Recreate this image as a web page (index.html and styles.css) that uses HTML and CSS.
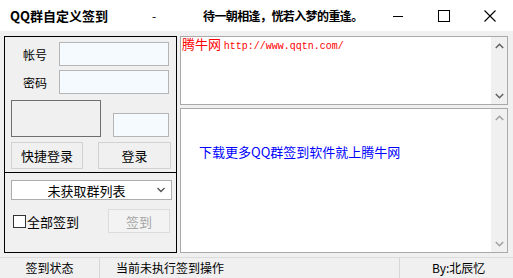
FILE: index.html
```html
<!DOCTYPE html>
<html lang="zh-CN">
<head>
    <meta charset="UTF-8">
    <title>QQ群自定义签到</title>
    <link rel="stylesheet" href="styles.css">
</head>
<body>
    <div class="window">
        <div class="titlebar">
            <span class="app-name">QQ群自定义签到</span>
            <span class="dash">-</span>
            <span class="motto">待一朝相逢，恍若入梦的重逢。</span>
            <div class="win-controls">
                <button class="win-btn" aria-label="最小化">
                    <svg width="10" height="10" viewBox="0 0 10 10"><path d="M0 5.5h10" stroke="#000" stroke-width="1"/></svg>
                </button>
                <button class="win-btn" aria-label="最大化">
                    <svg width="12" height="12" viewBox="0 0 12 12"><rect x="0.5" y="0.5" width="11" height="11" fill="none" stroke="#000"/></svg>
                </button>
                <button class="win-btn" aria-label="关闭">
                    <svg width="12" height="12" viewBox="0 0 12 12"><path d="M0.5 0.5l11 11M11.5 0.5l-11 11" stroke="#000" stroke-width="1.1"/></svg>
                </button>
            </div>
        </div>

        <div class="main">
            <div class="left-panel">
                <div class="login">
                    <div class="field-row">
                        <label class="field-label">帐号</label>
                        <input class="text-input" type="text">
                    </div>
                    <div class="field-row second">
                        <label class="field-label">密码</label>
                        <input class="text-input" type="password">
                    </div>
                    <div class="captcha-row">
                        <div class="captcha-box"></div>
                        <input class="text-input captcha-input" type="text">
                    </div>
                    <div class="button-row">
                        <button class="btn quick-btn">快捷登录</button>
                        <button class="btn login-btn">登录</button>
                    </div>
                </div>
                <div class="groups">
                    <div class="select-box">
                        <span class="select-text">未获取群列表</span>
                        <svg class="select-arrow" width="8" height="6" viewBox="0 0 8 6"><path d="M0.5 1l3.5 3.5 3.5-3.5" fill="none" stroke="#555" stroke-width="1.4"/></svg>
                    </div>
                    <div class="sign-row">
                        <label class="check-label"><span class="check-box"></span>全部签到</label>
                        <button class="btn sign-btn" disabled>签到</button>
                    </div>
                </div>
            </div>

            <div class="right-panel">
                <div class="text-box top-box">
                    <div class="text-content">
                        <span class="site-name">腾牛网</span> <span class="site-url">http://www.qqtn.com/</span>
                    </div>
                    <div class="scrollbar">
                        <svg width="9" height="6" viewBox="0 0 9 6"><path d="M0.8 5l3.7-3.7 3.7 3.7" fill="none" stroke="#606060" stroke-width="1.5"/></svg>
                        <svg width="9" height="6" viewBox="0 0 9 6"><path d="M0.8 1l3.7 3.7 3.7-3.7" fill="none" stroke="#606060" stroke-width="1.5"/></svg>
                    </div>
                </div>
                <div class="text-box bottom-box">
                    <div class="text-content ad-content">
                        <span class="ad-link">下载更多QQ群签到软件就上腾牛网</span>
                    </div>
                    <div class="scrollbar">
                        <svg width="9" height="6" viewBox="0 0 9 6"><path d="M0.8 5l3.7-3.7 3.7 3.7" fill="none" stroke="#a0a0a0" stroke-width="1.5"/></svg>
                        <svg width="9" height="6" viewBox="0 0 9 6"><path d="M0.8 1l3.7 3.7 3.7-3.7" fill="none" stroke="#a0a0a0" stroke-width="1.5"/></svg>
                    </div>
                </div>
            </div>
        </div>

        <div class="statusbar">
            <div class="status-cell status-name">签到状态</div>
            <div class="status-cell status-msg">当前未执行签到操作</div>
            <div class="status-cell status-author">By:北辰忆</div>
        </div>
    </div>
</body>
</html>
```

FILE: styles.css
```css
* {
    box-sizing: border-box;
}

body {
    margin: 0;
    font-family: "Noto Sans CJK SC", "Liberation Sans", sans-serif;
    font-size: 12px;
    color: #000;
    background: #f0f0f0;
}

.window {
    width: 513px;
    height: 278px;
    display: flex;
    flex-direction: column;
    background: #f0f0f0;
    overflow: hidden;
}

.titlebar {
    height: 31px;
    background: #fff;
    display: flex;
    align-items: center;
    flex-shrink: 0;
}

.app-name {
    padding-left: 10px;
    font-size: 13px;
    font-weight: bold;
    width: 152px;
}

.dash {
    font-size: 12px;
    width: 51px;
}

.motto {
    font-size: 12px;
    font-weight: bold;
    letter-spacing: -0.6px;
}

.win-controls {
    margin-left: auto;
    display: flex;
    height: 31px;
}

.win-btn {
    width: 46px;
    height: 31px;
    border: none;
    background: transparent;
    padding: 0;
    display: flex;
    align-items: center;
    justify-content: center;
}

.main {
    display: flex;
    gap: 3px;
    padding: 5px 0 0 4px;
    height: 222px;
}

.left-panel {
    width: 173px;
    height: 217px;
    border: 1px solid #000;
    display: flex;
    flex-direction: column;
}

.login {
    height: 136px;
    padding: 5px 0 0 6px;
    border-bottom: 1px solid #000;
}

.field-row {
    display: flex;
    align-items: center;
    height: 24px;
}

.field-row.second {
    margin-top: 4px;
}

.field-label {
    width: 48px;
    text-align: center;
}

.text-input {
    width: 110px;
    height: 24px;
    border: 1px solid #b5b5b5;
    background: #f5faff;
    padding: 0 3px;
    font: inherit;
    outline: none;
}

.captcha-row {
    display: flex;
    align-items: flex-end;
    margin-top: 6px;
}

.captcha-box {
    width: 90px;
    height: 37px;
    border: 1px solid #6e6e6e;
    background: #f0f0f0;
}

.captcha-input {
    width: 56px;
    margin-left: 12px;
}

.button-row {
    display: flex;
    margin-top: 5px;
}

.btn {
    height: 27px;
    border: 1px solid #d2d2d2;
    background: #f0f0f0;
    font-family: inherit;
    font-size: 13px;
    color: #000;
    padding: 0;
}

.quick-btn {
    width: 72px;
}

.login-btn {
    width: 73px;
    margin-left: 15px;
}

.groups {
    padding: 7px 0 0 6px;
}

.select-box {
    width: 161px;
    height: 20px;
    border: 1px solid #adadad;
    background: #fff;
    display: flex;
    align-items: center;
}

.select-text {
    flex: 1;
    text-align: center;
    font-size: 13px;
    padding-left: 4px;
}

.select-arrow {
    margin-right: 6px;
}

.sign-row {
    display: flex;
    align-items: center;
    margin-top: 9px;
    height: 24px;
}

.check-label {
    display: flex;
    align-items: center;
    width: 95px;
    font-size: 13px;
    margin-left: 2px;
}

.check-box {
    width: 13px;
    height: 13px;
    border: 1px solid #333;
    background: #fff;
    margin-right: 1px;
}

.sign-btn {
    width: 62px;
    height: 24px;
    border-color: #dcdcdc;
    background: #f3f3f3;
    color: #a6a6a6;
}

.right-panel {
    width: 328px;
    display: flex;
    flex-direction: column;
    gap: 3px;
}

.text-box {
    border: 1px solid #a9a9a9;
    background: #fff;
    display: flex;
}

.top-box {
    height: 69px;
}

.bottom-box {
    height: 146px;
}

.text-content {
    flex: 1;
    padding: 0 0 0 1px;
    line-height: 14px;
}

.site-name {
    color: #f00;
    font-size: 13px;
}

.site-url {
    color: #f00;
    font-family: "Liberation Mono", monospace;
    font-size: 10px;
}

.ad-content {
    padding: 36px 0 0 18px;
}

.ad-link {
    color: #00f;
    font-size: 13px;
}

.scrollbar {
    width: 16px;
    background: #f0f0f0;
    display: flex;
    flex-direction: column;
    justify-content: space-between;
    align-items: center;
    padding: 6px 0 5px;
}

.statusbar {
    margin-top: 4px;
    height: 21px;
    border-top: 1px solid #dcdcdc;
    display: flex;
    align-items: center;
}

.status-cell {
    height: 20px;
    line-height: 20px;
    font-size: 12px;
}

.status-name {
    width: 100px;
    text-align: center;
    border-right: 1px solid #d7d7d7;
}

.status-msg {
    width: 300px;
    padding-left: 16px;
    border-right: 1px solid #d7d7d7;
}

.status-author {
    flex: 1;
    padding-left: 32px;
}
```
